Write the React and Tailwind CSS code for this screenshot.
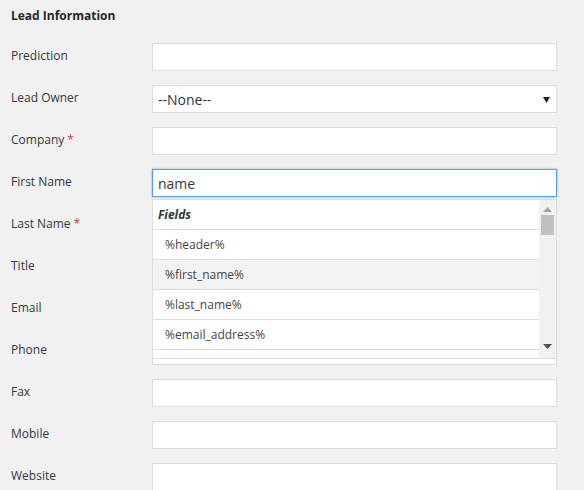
import React from "react";

const rowsTop = [
  { label: "Prediction" },
  { label: "Lead Owner", select: true },
  { label: "Company", required: true },
  { label: "First Name", value: "name", focused: true },
  { label: "Last Name", required: true },
  { label: "Title" },
  { label: "Email" },
  { label: "Phone" },
  { label: "Fax" },
  { label: "Mobile" },
  { label: "Website" },
];

const options = ["%header%", "%first_name%", "%last_name%", "%email_address%", ""];

const FieldsDropdown = () => (
  <div className="absolute left-0 right-0 top-[30px] z-10 h-[160px] overflow-hidden border border-[#dddddd] bg-white flex">
    <div className="flex-1 flex flex-col">
      <div className="h-[30px] shrink-0 border-b border-[#dddddd] pl-[5px] flex items-center font-bold italic text-[#32373c]">
        Fields
      </div>
      {options.map((opt, i) => (
        <div
          key={i}
          className={`h-[30px] shrink-0 border-b border-[#dddddd] pl-[12px] flex items-center text-[#444444] ${
            i === 1 ? "bg-[#f3f3f3]" : "bg-white"
          }`}
        >
          {opt}
        </div>
      ))}
    </div>
    <div className="w-[17px] shrink-0 bg-[#f1f1f1] flex flex-col items-center">
      <svg width="9" height="5" viewBox="0 0 9 5" className="mt-[7px]">
        <path d="M4.5 0 L9 5 L0 5 Z" fill="#a3a3a3" />
      </svg>
      <div className="mt-[3px] w-[13px] h-[20px] bg-[#c1c1c1]" />
      <div className="flex-1" />
      <svg width="9" height="5" viewBox="0 0 9 5" className="mb-[9px]">
        <path d="M0 0 L9 0 L4.5 5 Z" fill="#505050" />
      </svg>
    </div>
  </div>
);

const Field = ({ row }) => {
  if (row.select) {
    return (
      <div className="h-[28px] border border-[#dddddd] bg-white flex items-center justify-between pl-[5px] pr-[6px] text-[#32373c] text-[14px]">
        <span>--None--</span>
        <svg width="7" height="7" viewBox="0 0 7 7">
          <path d="M0 1 L7 1 L3.5 7 Z" fill="#222222" />
        </svg>
      </div>
    );
  }
  return (
    <div className="relative">
      <div
        className={`h-[28px] bg-white flex items-center pl-[5px] text-[14px] text-[#32373c] border ${
          row.focused ? "border-[#5b9dd9] shadow-[0_0_2px_rgba(30,140,190,0.6)]" : "border-[#dddddd]"
        }`}
      >
        {row.value}
      </div>
      {row.focused && <FieldsDropdown />}
    </div>
  );
};

export default function App() {
  return (
    <div
      className="w-[584px] h-[490px] overflow-hidden bg-[#f1f1f1] text-[12px] text-[#32373c]"
      style={{ fontFamily: '"Open Sans", "Noto Sans", sans-serif' }}
    >
      <div className="pt-[7px] pl-[11px] h-[25px] leading-[18px] font-bold text-[#23282d]">
        Lead Information
      </div>
      <div className="mt-[18px] flex flex-col gap-[14px]">
        {rowsTop.map((row) => (
          <div key={row.label} className="flex items-center h-[28px]">
            <div className="w-[152px] shrink-0 pl-[11px] pb-[2px] text-[#32373c]">
              {row.label}
              {row.required && <span className="text-[#dc3232] ml-[3px]">*</span>}
            </div>
            <div className="w-[405px] shrink-0">
              <Field row={row} />
            </div>
          </div>
        ))}
      </div>
    </div>
  );
}
